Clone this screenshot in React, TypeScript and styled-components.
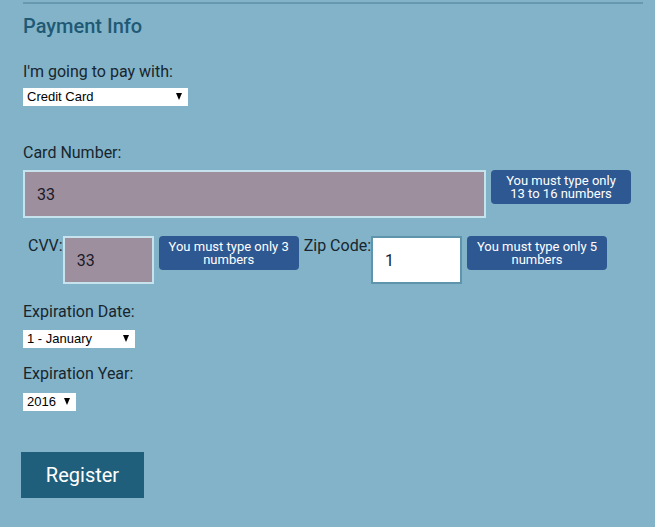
import React from "react";
import styled, { createGlobalStyle } from "styled-components";

const Global = createGlobalStyle`
  html, body { margin: 0; padding: 0; background: #83b3c9; }
  body { font-family: Roboto, "Liberation Sans", Arial, sans-serif; }
  * { box-sizing: border-box; }
`;

const Page = styled.div`
  width: 655px;
  min-height: 527px;
  background: #83b3c9;
  padding: 2px 12px 0 23px;
`;

const Rule = styled.div`
  width: 620px;
  height: 2px;
  background: #6698af;
`;

const Heading = styled.h2`
  margin: 10px 0 0;
  font-size: 20px;
  line-height: 24px;
  font-weight: 500;
  color: #1f5a75;
`;

const Label = styled.div<{ $top: number }>`
  margin-top: ${(p) => p.$top}px;
  font-size: 16px;
  line-height: 20px;
  color: #17262e;
`;

const SelectWrap = styled.div<{ $w: number; $top?: number }>`
  position: relative;
  width: ${(p) => p.$w}px;
  height: 18px;
  margin-top: ${(p) => p.$top ?? 7}px;
  background: #fff;
`;

const Select = styled.select`
  appearance: none;
  -webkit-appearance: none;
  display: block;
  width: 100%;
  height: 18px;
  border: none;
  outline: none;
  background: transparent;
  font-family: "Liberation Sans", Arial, sans-serif;
  font-size: 13px;
  color: #000;
  padding: 0 0 1px 4px;
  margin: 0;
  line-height: 17px;
`;

const Arrow = styled.span`
  position: absolute;
  right: 6px;
  top: 5px;
  width: 0;
  height: 0;
  border-left: 3.5px solid transparent;
  border-right: 3.5px solid transparent;
  border-top: 7px solid #000;
  pointer-events: none;
`;

const Row = styled.div<{ $top: number; $pad?: number }>`
  display: flex;
  align-items: flex-start;
  margin-top: ${(p) => p.$top}px;
  padding-left: ${(p) => p.$pad ?? 0}px;
`;

const Field = styled.input<{ $w: number; $invalid?: boolean }>`
  width: ${(p) => p.$w}px;
  height: 48px;
  margin: 0;
  padding: 0 0 0 12px;
  border: 2px solid ${(p) => (p.$invalid ? "#c6e2ed" : "#5e95ad")};
  background: ${(p) => (p.$invalid ? "#9e8f9e" : "#ffffff")};
  font-family: Roboto, "Liberation Sans", Arial, sans-serif;
  font-size: 16px;
  color: #1a1a26;
  outline: none;
`;

const Tip = styled.div`
  width: 140px;
  margin: 0 5px;
  padding: 4px 8px;
  background: #2e5892;
  border-radius: 4px;
  color: #fff;
  font-size: 13px;
  line-height: 13px;
  text-align: center;
`;

const InlineLabel = styled.span`
  font-size: 16px;
  line-height: 20px;
  color: #17262e;
`;

const Button = styled.button`
  display: block;
  margin: 41px 0 0 -2px;
  width: 123px;
  height: 46px;
  border: none;
  background: #1f5f7b;
  color: #fff;
  font-family: Roboto, "Liberation Sans", Arial, sans-serif;
  font-size: 20px;
  padding: 0;
`;

export default function App() {
  return (
    <Page>
      <Global />
      <Rule />
      <Heading>Payment Info</Heading>
      <Label $top={24}>I'm going to pay with:</Label>
      <SelectWrap $w={165} $top={6}>
        <Select defaultValue="cc">
          <option value="cc">Credit Card</option>
          <option value="pp">PayPal</option>
        </Select>
        <Arrow />
      </SelectWrap>
      <Label $top={37}>Card Number:</Label>
      <Row $top={7}>
        <Field $w={463} $invalid defaultValue="33" />
        <Tip>You must type only 13 to 16 numbers</Tip>
      </Row>
      <Row $top={18} $pad={5}>
        <InlineLabel>CVV:</InlineLabel>
        <Field $w={91} $invalid defaultValue="33" />
        <Tip>You must type only 3 numbers</Tip>
        <InlineLabel>Zip Code:</InlineLabel>
        <Field $w={91} defaultValue="1" />
        <Tip>You must type only 5 numbers</Tip>
      </Row>
      <Label $top={18}>Expiration Date:</Label>
      <SelectWrap $w={112} $top={8}>
        <Select defaultValue="1">
          <option value="1">1 - January</option>
          <option value="2">2 - February</option>
        </Select>
        <Arrow />
      </SelectWrap>
      <Label $top={16}>Expiration Year:</Label>
      <SelectWrap $w={53} $top={9}>
        <Select defaultValue="2016">
          <option value="2016">2016</option>
          <option value="2017">2017</option>
        </Select>
        <Arrow />
      </SelectWrap>
      <Button>Register</Button>
    </Page>
  );
}
